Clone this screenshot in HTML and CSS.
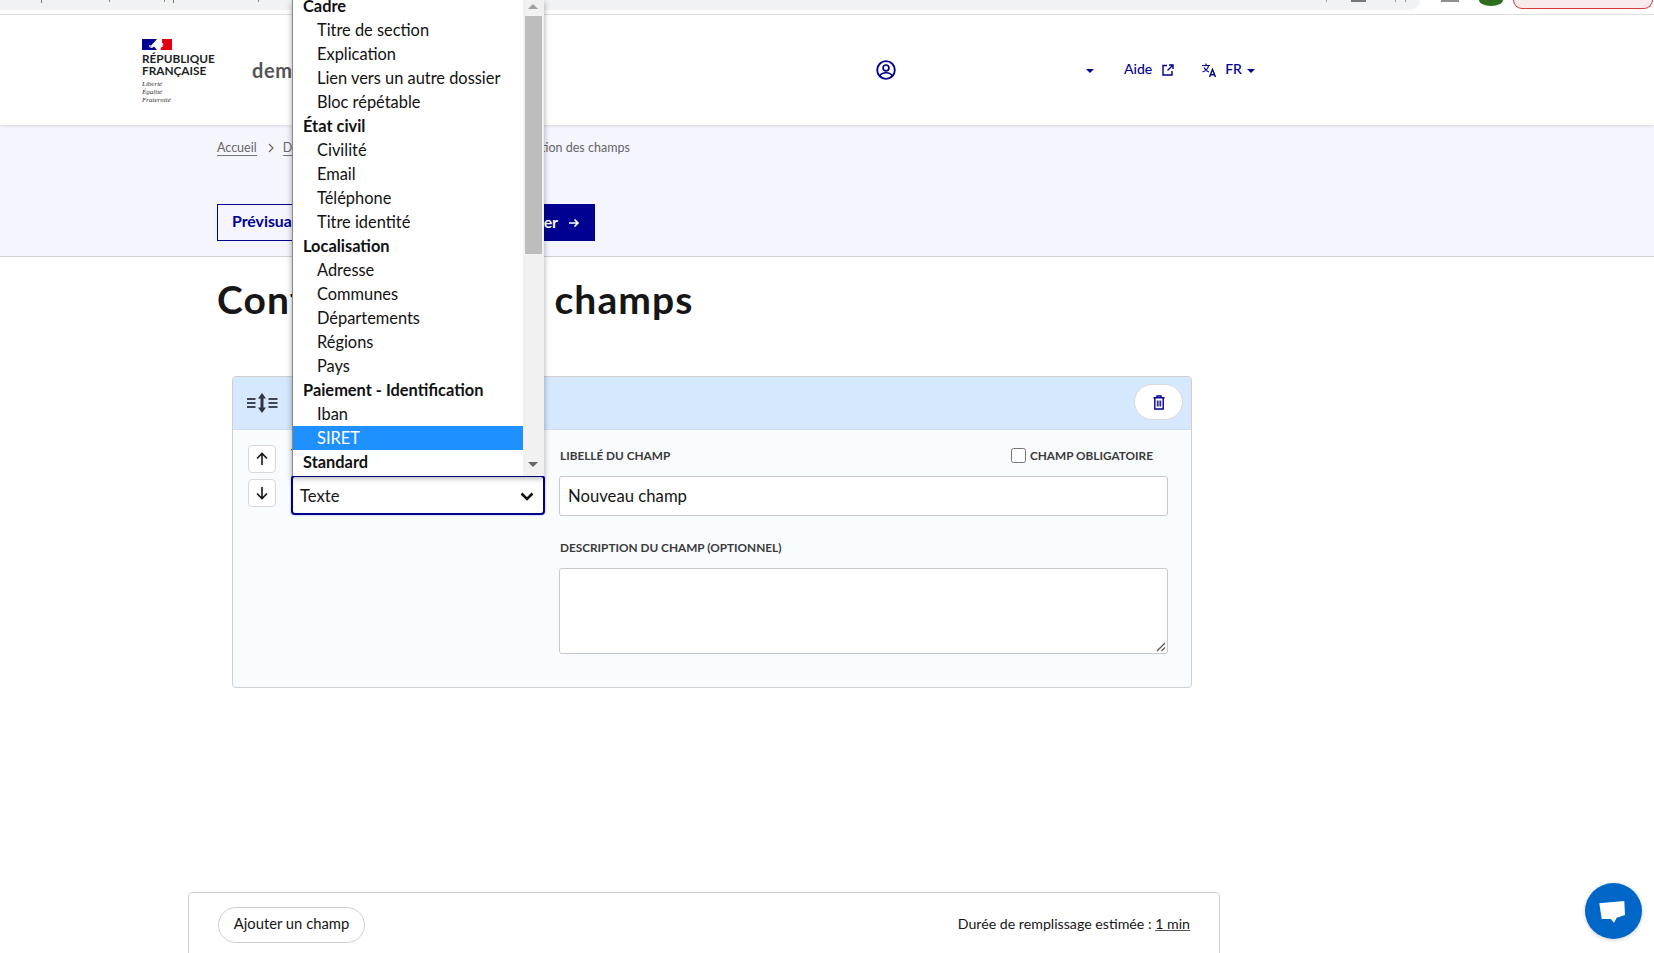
FILE: index.html
```html
<!DOCTYPE html>
<html lang="fr">
<head>
<meta charset="utf-8">
<title>Configuration des champs</title>
<link rel="stylesheet" href="styles.css">
</head>
<body>
<div class="page">
  <div class="chrome">
    <div class="omnibox"></div>
    <div class="chrome-right">
      <span class="dash"></span>
      <span class="avatar"></span>
      <span class="update"></span>
    </div>
  </div>

  <header class="header">
    <div class="logo">
      <svg class="flag" viewBox="0 0 30 11" aria-hidden="true"><rect width="30" height="11" fill="#fff"/><rect width="15" height="11" fill="#000091"/><path d="M20 0h10v11H18.500l.5-2.500 2-1-.5-1.500 1-.5-1.500-2z" fill="#e1000f"/><path d="M15 0l-3.500 4L9 6.500 7.500 6 7 8l3 1 2-1.500 3 3.500z" fill="#fff"/><path d="M7 7.500l3-1.500-1 2.500z" fill="#9a9ad0"/></svg>
      <div class="rep">RÉPUBLIQUE<br>FRANÇAISE</div>
      <div class="devise">Liberté<br>Égalité<br>Fraternité</div>
    </div>
    <div class="site-name">demarches</div>
    <nav class="nav">
      <svg class="i-user" viewBox="0 0 24 24" aria-hidden="true"><circle cx="12" cy="12" r="10.600" fill="none" stroke="#000091" stroke-width="2.200"/><circle cx="12" cy="9.500" r="3.500" fill="none" stroke="#000091" stroke-width="2"/><path d="M4.500 19c2.500-5 12.500-5 15 0" fill="none" stroke="#000091" stroke-width="2"/></svg>
      <span class="caret caret-user"></span>
      <a class="nav-link nav-aide">Aide
        <svg class="i-ext" viewBox="0 0 12 12" aria-hidden="true"><path d="M5 1.500H1v9.500h9V7M7 1h4v4M11 1L5.500 6.500" fill="none" stroke="#000091" stroke-width="1.400"/></svg>
      </a>
      <svg class="i-lang" viewBox="0 0 16 16" aria-hidden="true"><path d="M1 3.500h8M5 1.500v2M7.500 3.500C7 7 4.500 9 1.500 10M3 5.500c1 2 2.500 3.500 5 4.500" fill="none" stroke="#000091" stroke-width="1.200"/><path d="M8.500 15l3-7.500 3 7.500M9.500 12.800h4" fill="none" stroke="#000091" stroke-width="1.400"/></svg>
      <a class="nav-link nav-fr">FR</a>
      <span class="caret"></span>
    </nav>
  </header>

  <section class="band">
    <div class="crumbs">
      <a class="crumb">Accueil</a>
      <svg class="sep" viewBox="0 0 6 10" aria-hidden="true"><path d="M1 1l4 4-4 4" fill="none" stroke="#666" stroke-width="1.200"/></svg>
      <a class="crumb">Démarches</a>
      <span class="crumb-last">Configuration des champs</span>
    </div>
    <div class="actions">
      <a class="btn-outline">Prévisualiser</a>
      <a class="btn-solid">Continuer
        <svg class="i-arrow" viewBox="0 0 12 12" aria-hidden="true"><path d="M1 6h9M6.500 2.500L10 6l-3.500 3.500" fill="none" stroke="#fff" stroke-width="1.700"/></svg>
      </a>
    </div>
  </section>

  <main class="main">
    <h1 class="title">Configuration des champs</h1>

    <section class="card">
      <div class="card-head">
        <svg class="i-resize" viewBox="0 0 32 20" aria-hidden="true"><path d="M1 6h8.500M1 10h8.500M1 14h8.500M22.500 6h9M22.500 10h9M22.500 14h9" stroke="#3f4652" stroke-width="2" fill="none"/><path d="M16 0l4 5.500h-2.500v9H20L16 20l-4-5.500h2.500v-9H12z" fill="#2f3540"/></svg>
        <button class="trash" type="button" aria-label="Supprimer">
          <svg viewBox="0 0 12 15" aria-hidden="true"><path d="M4 2V1h4v1M0.500 2.800h11M1.800 3v11h8.400V3" fill="none" stroke="#000091" stroke-width="1.400"/><path d="M4.300 5.500v6M6 5.500v6M7.700 5.500v6" stroke="#000091" stroke-width="1"/></svg>
        </button>
      </div>
      <div class="card-body">
        <div class="movers">
          <button class="move" type="button" aria-label="Monter"><svg viewBox="0 0 14 14" aria-hidden="true"><path d="M7 13V1.500M2 6.500l5-5 5 5" fill="none" stroke="#161616" stroke-width="1.600"/></svg></button>
          <button class="move" type="button" aria-label="Descendre"><svg viewBox="0 0 14 14" aria-hidden="true"><path d="M7 1v11.500M2 7.500l5 5 5-5" fill="none" stroke="#161616" stroke-width="1.600"/></svg></button>
        </div>
        <div class="col-type">
          <label class="lbl">Type de champ</label>
          <div class="select">Texte
            <svg viewBox="0 0 14 9" aria-hidden="true"><path d="M1.500 1.500L7 7l5.500-5.500" fill="none" stroke="#111" stroke-width="2.600"/></svg>
          </div>
        </div>
        <div class="col-main">
          <div class="lbl-row">
            <label class="lbl">Libellé du champ</label>
            <label class="check"><span class="box"></span><span class="lbl">Champ obligatoire</span></label>
          </div>
          <div class="input">Nouveau champ</div>
          <label class="lbl lbl-desc">Description du champ (optionnel)</label>
          <div class="textarea">
            <svg class="grip" viewBox="0 0 10 10" aria-hidden="true"><path d="M1 9l8-8M5.500 9L9 5.500" stroke="#555" stroke-width="1.200"/></svg>
          </div>
        </div>
      </div>
    </section>

    <section class="footer-card">
      <a class="add">Ajouter un champ</a>
      <span class="duration">Durée de remplissage estimée : <u class="min">1 min</u></span>
    </section>
  </main>

  <div class="popup">
    <ul class="list">
      <li class="grp">Cadre</li>
      <li>Titre de section</li>
      <li>Explication</li>
      <li>Lien vers un autre dossier</li>
      <li>Bloc répétable</li>
      <li class="grp">État civil</li>
      <li>Civilité</li>
      <li>Email</li>
      <li>Téléphone</li>
      <li>Titre identité</li>
      <li class="grp">Localisation</li>
      <li>Adresse</li>
      <li>Communes</li>
      <li>Départements</li>
      <li>Régions</li>
      <li>Pays</li>
      <li class="grp">Paiement - Identification</li>
      <li>Iban</li>
      <li class="sel">SIRET</li>
      <li class="grp">Standard</li>
    </ul>
    <div class="scrollbar">
      <span class="arr-up"></span>
      <span class="thumb"></span>
      <span class="arr-down"></span>
    </div>
  </div>

  <div class="chat">
    <svg viewBox="0 0 30 30" aria-hidden="true"><path d="M.3 7.300L25.300 5 26 19l-8.300 2.700L15 26.700 11.700 23l-9 0z" fill="#fff"/></svg>
  </div>
</div>
</body>
</html>
```
FILE: styles.css
```css
* { box-sizing: border-box; }
html, body { margin: 0; padding: 0; height: 100%; overflow: hidden; background: #fff; }
body { font-family: "Lato", "Noto Sans", sans-serif; color: #161616; }
.page { position: relative; width: 1654px; height: 953px; overflow: hidden; }
a { color: inherit; text-decoration: none; }

.chrome { height: 15px; display: flex; justify-content: space-between; border-bottom: 1px solid #e2e2e2; background: #fff; }
.omnibox {
  width: 1420px; height: 10px; background-color: #f0f2f4; border-bottom-right-radius: 10px;
  background-repeat: no-repeat;
  background-image:
    linear-gradient(#8a7a60, #8a7a60), linear-gradient(#888, #888), linear-gradient(#888, #888), linear-gradient(#8a7a60, #8a7a60), linear-gradient(#888, #888),
    linear-gradient(#aaa, #aaa), linear-gradient(#777, #777), linear-gradient(#999, #999), linear-gradient(#999, #999);
  background-size: 1px 3px, 1px 2px, 1px 2px, 1px 3px, 1px 2px, 1px 2px, 15px 2px, 1px 2px, 1px 2px;
  background-position: 41px 0, 109px 0, 164px 0, 173px 0, 258px 0, 1326px 0, 1351px 0, 1395px 0, 1405px 0;
}
.chrome-right { display: flex; align-items: flex-start; padding-right: 1px; }
.dash { width: 18px; height: 2px; background: #8f8f8f; margin-right: 20px; }
.avatar { width: 24px; height: 6px; background: #2f6e1d; border-radius: 0 0 50% 50% / 0 0 100% 100%; margin-right: 10px; }
.update { width: 140px; height: 9px; background: #f9ebeb; border: 1px solid #d93a3a; border-top: 0; border-radius: 0 0 12px 12px; }

.header { height: 110px; display: flex; align-items: center; padding-left: 142px; background: #fff; box-shadow: 0 1px 3px rgba(0,0,18,.12); position: relative; }
.logo { width: 110px; align-self: flex-start; margin-top: 24px; }
.flag { display: block; width: 30px; height: 11px; margin-bottom: 3px; }
.rep { font-size: 11.800px; line-height: 12px; font-weight: 700; color: #1e1e1e; }
.devise { font-family: "Liberation Serif", serif; font-style: italic; font-size: 7px; line-height: 8px; margin-top: 3px; color: #333; }
.site-name { font-size: 20px; font-weight: 700; color: #555; letter-spacing: .6px; width: 280px; }
.nav { display: flex; align-items: center; color: #000091; font-size: 14px; font-weight: 500; }
.i-user { width: 20px; height: 20px; margin-left: 344px; }
.caret { width: 0; height: 0; border-left: 4.500px solid transparent; border-right: 4.500px solid transparent; border-top: 4.500px solid #000091; margin-top: 2px; }
.caret-user { margin-left: 190px; }
.nav-link { margin-bottom: 3px; }
.nav-aide { display: flex; align-items: center; margin-left: 30px; gap: 10px; }
.i-ext { width: 12px; height: 12px; margin-top: 3px; }
.i-lang { width: 16px; height: 16px; margin-left: 27px; }
.nav-fr { margin-left: 8px; margin-right: 5px; }

.band { height: 132px; background: #f5f5fe; border-bottom: 1px solid #cecece; padding: 14px 0 0 217px; }
.crumbs { display: flex; align-items: center; font-size: 12.500px; color: #666; line-height: 18px; }
.crumb { border-bottom: 1px solid #777; line-height: 15px; }
.sep { width: 6px; height: 10px; margin: 0 9px 0 11px; }
.crumb-last { margin-left: 143px; }
.actions { display: flex; margin-top: 47px; gap: 94px; }
.btn-outline { height: 37px; width: 160px; padding: 0 14px; border: 1px solid #000091; color: #000091; font-size: 15.800px; font-weight: 700; line-height: 32px; }
.btn-solid { height: 37px; width: 124px; padding: 0 15px 2px 0; background: #000091; color: #fff; font-size: 15.800px; font-weight: 700; display: flex; align-items: center; justify-content: flex-end; gap: 10px; }
.i-arrow { width: 12px; height: 12px; flex: none; margin-top: 2px; }

.title { margin: 19px 0 0 217px; font-size: 39px; letter-spacing: 1.100px; line-height: 46px; font-weight: 700; color: #161616; }
.card { margin: 54px 0 0 232px; width: 960px; height: 312px; border: 1px solid #cfcfcf; border-radius: 4px; background: #f9fcff; overflow: hidden; }
.card-head { height: 53px; background: #d5e8fd; display: flex; align-items: center; justify-content: space-between; padding: 0 8px 0 13px; border-bottom: 1px solid #cfdff0; }
.i-resize { width: 32px; height: 20px; }
.trash { width: 49px; height: 36px; margin-bottom: 2px; background: #fff; border: 1px solid #d8d8d8; border-radius: 18px; padding: 0; display: flex; align-items: center; justify-content: center; }
.trash svg { width: 12px; height: 15px; }
.card-body { display: flex; padding-top: 15px; }
.movers { width: 58px; padding-left: 15px; display: flex; flex-direction: column; gap: 6px; }
.move { width: 28px; height: 28px; background: #fff; border: 1px solid #d8d8d8; border-radius: 4px; padding: 0; display: flex; align-items: center; justify-content: center; }
.move svg { width: 14px; height: 14px; }
.col-type { width: 254px; }
.lbl { font-size: 11.800px; line-height: 16px; font-weight: 700; text-transform: uppercase; color: #3a3a3a; display: block; }
.col-type .lbl { height: 22px; }
.select { margin-top: 8px; height: 40px; border: 2px solid #000091; border-radius: 4px; background: #fff; display: flex; align-items: center; justify-content: space-between; padding: 2px 9px 0 7px; font-size: 16.700px; box-shadow: 0 0 2px rgba(0,0,145,.4); }
.select svg { width: 14px; height: 9px; }
.col-main { width: 609px; margin-left: 14px; }
.lbl-row { display: flex; justify-content: space-between; height: 23px; padding: 3px 15px 0 1px; }
.check { display: flex; align-items: flex-start; gap: 5px; margin-top: -1px; }
.box { width: 15px; height: 15px; border: 1.500px solid #767676; border-radius: 2.500px; background: #fff; margin: 1px 0 0 1px; }
.check .lbl { margin: 1px 0 0 -1px; }
.input { margin-top: 8px; height: 40px; border: 1px solid #c9c9c9; border-radius: 3px; background: #fff; padding: 0 8px; font-size: 16.700px; line-height: 38px; }
.lbl-desc { margin-top: 24px; padding-left: 1px; }
.textarea { margin-top: 12px; height: 86px; border: 1px solid #c9c9c9; border-radius: 3px; background: #fff; position: relative; }
.grip { position: absolute; right: 1px; bottom: 1px; width: 10px; height: 10px; }

.footer-card { margin: 204px 0 0 188px; width: 1032px; height: 80px; border: 1px solid #cfcfcf; border-radius: 4px 4px 0 0; padding: 14px 29px; display: flex; justify-content: space-between; align-items: flex-start; }
.add { height: 36px; width: 147px; border: 1px solid #cfcfcf; border-radius: 18px; font-size: 14.800px; line-height: 31px; text-align: center; }
.duration { font-size: 14.200px; line-height: 33px; }
.min { text-decoration-color: #555; }

.popup { position: absolute; left: 292px; top: 0; width: 252px; height: 476px; background: #fff; border-left: 1px solid #8a8a8a; box-shadow: 0 2px 6px rgba(0,0,0,.35); overflow: hidden; display: flex; }
.list { list-style: none; margin: -6px 0 0; padding: 0; width: 230px; flex: none; font-size: 16.400px; line-height: 24px; color: #111; }
.list li { height: 24px; padding-left: 24px; white-space: nowrap; }
.list li.grp { padding-left: 10px; font-weight: 700; }
.list li.sel { background: #1e90ff; color: #fff; }
.scrollbar { flex: none; width: 21px; background: #f1f1f1; position: relative; }
.thumb { position: absolute; left: 2px; top: 16px; width: 17px; height: 238px; background: #bdbdbd; }
.arr-up, .arr-down { position: absolute; left: 5px; width: 0; height: 0; border-left: 5px solid transparent; border-right: 5px solid transparent; }
.arr-up { top: 4px; border-bottom: 5px solid #a0a0a0; }
.arr-down { bottom: 9px; border-top: 5px solid #666; }

.chat { position: absolute; left: 1585px; top: 883px; width: 57px; height: 56px; border-radius: 50%; background: #0067c8; display: flex; align-items: center; justify-content: center; box-shadow: 0 1px 4px rgba(0,0,0,.2); }
.chat svg { width: 30px; height: 30px; }
```
